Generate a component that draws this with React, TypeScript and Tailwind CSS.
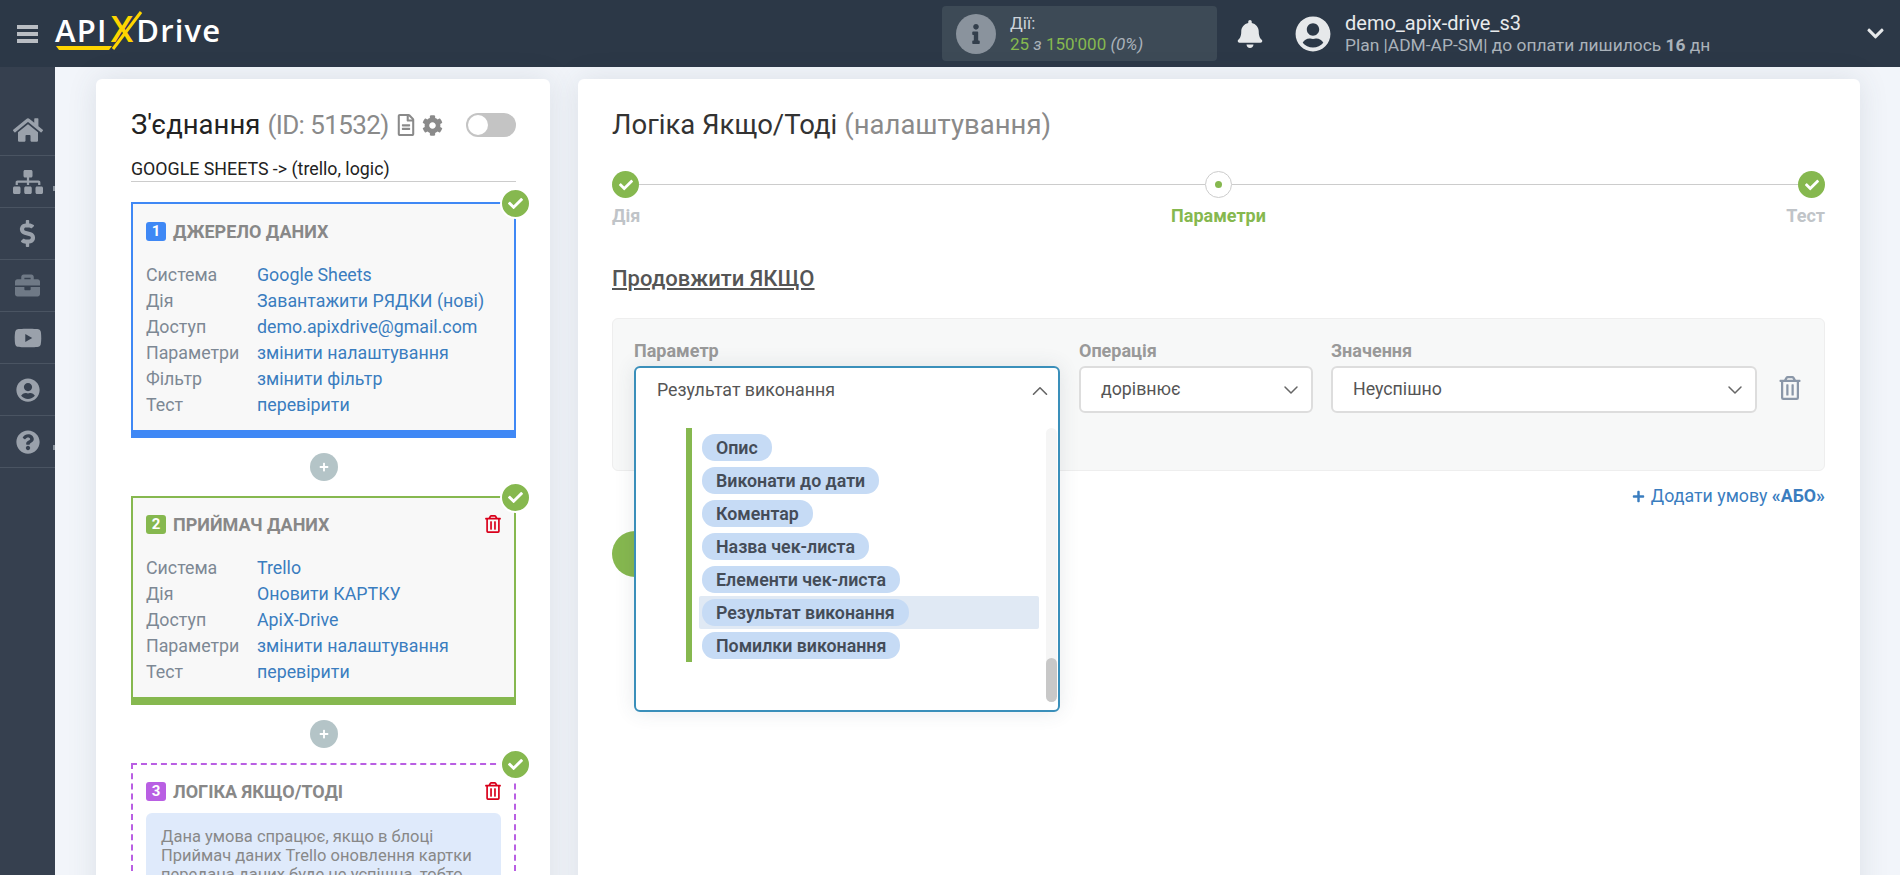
import { ChevronDown, ChevronUp } from 'lucide-react'
import {
  FaBell,
  FaBriefcase,
  FaCheck,
  FaChevronDown,
  FaCog,
  FaDollarSign,
  FaHome,
  FaInfo,
  FaPlus,
  FaQuestionCircle,
  FaRegFileAlt,
  FaRegTrashAlt,
  FaSitemap,
  FaUserCircle,
  FaYoutube,
} from 'react-icons/fa'

const navItems = [
  { icon: <FaSitemap size={30} />, color: 'text-[#9aa1ab]' },
  { icon: <FaDollarSign size={27} />, color: 'text-[#9aa1ab]' },
  { icon: <FaBriefcase size={25} />, color: 'text-[#6f7986]' },
  { icon: <FaYoutube size={28} />, color: 'text-[#9aa1ab]' },
  { icon: <FaUserCircle size={24} />, color: 'text-[#9aa1ab]' },
  { icon: <FaQuestionCircle size={24} />, color: 'text-[#9aa1ab]' },
]

const sourceRows = [
  ['Система', 'Google Sheets'],
  ['Дія', 'Завантажити РЯДКИ (нові)'],
  ['Доступ', 'demo.apixdrive@gmail.com'],
  ['Параметри', 'змінити налаштування'],
  ['Фільтр', 'змінити фільтр'],
  ['Тест', 'перевірити'],
]

const targetRows = [
  ['Система', 'Trello'],
  ['Дія', 'Оновити КАРТКУ'],
  ['Доступ', 'ApiX-Drive'],
  ['Параметри', 'змінити налаштування'],
  ['Тест', 'перевірити'],
]

const fields = [
  'Опис',
  'Виконати до дати',
  'Коментар',
  'Назва чек-листа',
  'Елементи чек-листа',
  'Результат виконання',
  'Помилки виконання',
]

function CheckMark() {
  return (
    <span className="absolute -top-[16px] -right-[17px] flex h-[31px] w-[31px] items-center justify-center rounded-full border-2 border-white bg-[#86b84f] text-white">
      <FaCheck size={15} />
    </span>
  )
}

function Rows({ rows, className }: { rows: string[][]; className: string }) {
  return (
    <div className={className}>
      {rows.map(([label, value]) => (
        <div key={label} className="flex h-[26px] items-center text-[17.8px]">
          <span className="w-[111px] text-[#7d8894]">{label}</span>
          <span className="text-[#3a7dbf]">{value}</span>
        </div>
      ))}
    </div>
  )
}

function CardHeader({ num, title, badge, trash }: { num: number; title: string; badge: string; trash?: boolean }) {
  return (
    <div className="flex h-[20px] items-center">
      <span className={`flex h-[19px] w-[20px] items-center justify-center rounded-[3px] text-[15px] font-bold text-white ${badge}`}>
        {num}
      </span>
      <span className="ml-[7px] text-[18px] font-bold text-[#888888]">{title}</span>
      {trash ? <FaRegTrashAlt size={18} className="-mr-[1px] ml-auto text-[#d9001b]" /> : null}
    </div>
  )
}

function AddButton() {
  return (
    <div className="my-[15px] flex justify-center">
      <span className="flex h-[28px] w-[28px] items-center justify-center rounded-full bg-[#b4c4c7] text-white">
        <FaPlus size={10} />
      </span>
    </div>
  )
}

function SelectBox({ text, width }: { text: string; width: string }) {
  return (
    <div className={`flex h-[47px] items-center justify-between rounded-[6px] border-2 border-[#dddddd] bg-white pr-[8px] pl-[20px] text-[17.8px] text-[#555555] ${width}`}>
      {text}
      <ChevronDown size={24} strokeWidth={1.5} className="text-[#666666]" />
    </div>
  )
}

function Logo() {
  return (
    <div className="relative ml-[17px] flex h-[67px] w-[180px] items-baseline pt-[12px] font-['Open_Sans',sans-serif] text-[31px] leading-[34px] font-semibold tracking-[1.2px] text-white">
      <span>API</span>
      <span className="ml-[3px] text-[36px] text-[#ffd500]">X</span>
      <span className="ml-[2px]">Drive</span>
      <svg viewBox="0 0 180 67" className="absolute top-0 left-0 h-[67px] w-[180px]">
        <polygon points="1,46 57,46 54,50 4,50" fill="#ffd500" />
        <line x1="58" y1="49" x2="86" y2="12" stroke="#ffd500" strokeWidth="3" />
      </svg>
    </div>
  )
}

export default function App() {
  return (
    <div className="flex h-[875px] flex-col overflow-hidden bg-[#f2f5fa] font-['Roboto',sans-serif]">
      <header className="flex h-[67px] shrink-0 items-center bg-[#2c3847]">
        <div className="ml-[17px] flex w-[21px] flex-col gap-[3px]">
          <span className="h-[4px] bg-[#b9bdc3]" />
          <span className="h-[4px] bg-[#b9bdc3]" />
          <span className="h-[4px] bg-[#b9bdc3]" />
        </div>
        <Logo />
        <div className="ml-[707px] flex h-[55px] w-[275px] items-center rounded-[4px] bg-[#3d4a56] pl-[14px]">
          <span className="flex h-[40px] w-[40px] items-center justify-center rounded-full bg-[#8a939d] text-[#333f4c]">
            <FaInfo size={20} />
          </span>
          <div className="ml-[14px] text-[17px] leading-[21px]">
            <div className="text-[#ccd2d8]">Дії:</div>
            <div className="text-[#86b84f]">
              25 <i className="text-[#aab2ba]">з</i> 150'000 <i className="text-[#aab2ba]">(0%)</i>
            </div>
          </div>
        </div>
        <FaBell size={28} className="ml-[19px] text-[#e6e8ea]" />
        <FaUserCircle size={36} className="ml-[31px] text-[#e6e8ea]" />
        <div className="ml-[14px] leading-[22px]">
          <div className="text-[20px] text-[#e8eaec]">demo_apix-drive_s3</div>
          <div className="text-[17.4px] text-[#aab2ba]">
            Plan |ADM-AP-SM| до оплати лишилось <b>16</b> дн
          </div>
        </div>
        <FaChevronDown size={19} className="mr-[15px] ml-auto text-[#e6e8ea]" />
      </header>

      <div className="flex min-h-0 flex-1">
        <aside className="relative w-[55px] shrink-0 bg-[#36404f]">
          <div className="flex h-[89px] items-end justify-center border-b border-[#4a5462] pb-[10px] text-[#9aa1ab]">
            <FaHome size={30} />
          </div>
          {navItems.map((item, index) => (
            <div key={index} className={`flex h-[52px] items-center justify-center border-b border-[#4a5462] ${item.color}`}>
              {item.icon}
            </div>
          ))}
          <span className="absolute top-[119px] right-0 h-[5px] w-[2px] bg-[#8a939d]" />
          <span className="absolute top-[378px] right-0 h-[5px] w-[2px] bg-[#8a939d]" />
        </aside>

        <main className="flex min-w-0 flex-1 gap-[28px] pt-[12px] pr-[40px] pl-[41px]">
          <section className="h-[900px] w-[454px] shrink-0 rounded-[6px] bg-white pt-[30px] pr-[34px] pl-[35px] shadow-[0_0_30px_rgba(60,70,90,0.12)]">
            <div className="flex h-[32px] items-center">
              <span className="text-[27.5px] text-[#222222]">З'єднання</span>
              <span className="ml-[7px] text-[26px] tracking-[-0.6px] text-[#8a8a8a]">(ID: 51532)</span>
              <FaRegFileAlt size={22} className="ml-[6px] text-[#8a8a8a]" />
              <FaCog size={21} className="ml-[5px] text-[#8a8a8a]" />
              <span className="relative ml-auto h-[24px] w-[50px] rounded-full bg-[#c4c4c4]">
                <span className="absolute top-[2px] left-[2px] h-[20px] w-[20px] rounded-full bg-white" />
              </span>
            </div>
            <div className="mt-[11px] flex h-[30px] items-center border-b border-[#cccccc] pt-[6px] text-[17.8px] text-[#222222]">
              GOOGLE SHEETS -&gt; (trello, logic)
            </div>

            <div className="relative mt-[20px] border-2 border-b-[8px] border-[#3f88f5] bg-[#f8f8f8] px-[13px] pt-[17px] pb-[12px]">
              <CheckMark />
              <CardHeader num={1} title="ДЖЕРЕЛО ДАНИХ" badge="bg-[#3f88f5]" />
              <Rows rows={sourceRows} className="mt-[21px]" />
            </div>

            <AddButton />

            <div className="relative border-2 border-b-[8px] border-[#86b84f] bg-[#f8f8f8] px-[13px] pt-[16px] pb-[12px]">
              <CheckMark />
              <CardHeader num={2} title="ПРИЙМАЧ ДАНИХ" badge="bg-[#86b84f]" trash />
              <Rows rows={targetRows} className="mt-[21px]" />
            </div>

            <AddButton />

            <div className="relative border-2 border-dashed border-[#b95fe3] bg-white px-[13px] pt-[16px] pb-[13px]">
              <CheckMark />
              <CardHeader num={3} title="ЛОГІКА ЯКЩО/ТОДІ" badge="bg-[#b95fe3]" trash />
              <div className="mt-[12px] rounded-[6px] bg-[#dfeafb] px-[15px] pt-[14px] pb-[14px] text-[16.5px] leading-[19px] text-[#888888]">
                Дана умова спрацює, якщо в блоці Приймач даних Trello оновлення картки передана даних буде не успішна, тобто
                виникне помилка
              </div>
            </div>
          </section>

          <section className="h-[900px] min-w-0 flex-1 rounded-[6px] bg-white pt-[30px] pr-[35px] pl-[34px] shadow-[0_0_30px_rgba(60,70,90,0.12)]">
            <div className="flex h-[32px] items-center text-[27.5px]">
              <span className="text-[#333333]">Логіка Якщо/Тоді</span>
              <span className="ml-[7px] text-[#8a8a8a]">(налаштування)</span>
            </div>

            <div className="mt-[30px] flex items-center">
              <span className="flex h-[27px] w-[27px] items-center justify-center rounded-full bg-[#86b84f] text-white">
                <FaCheck size={14} />
              </span>
              <span className="h-[1px] flex-1 bg-[#cccccc]" />
              <span className="flex h-[27px] w-[27px] items-center justify-center rounded-full border border-[#cccccc] bg-white">
                <span className="h-[7px] w-[7px] rounded-full bg-[#86b84f]" />
              </span>
              <span className="h-[1px] flex-1 bg-[#cccccc]" />
              <span className="flex h-[27px] w-[27px] items-center justify-center rounded-full bg-[#86b84f] text-white">
                <FaCheck size={14} />
              </span>
            </div>
            <div className="mt-[4px] grid h-[20px] grid-cols-3 items-center text-[18px] font-bold">
              <span className="text-[#c0c4c8]">Дія</span>
              <span className="text-center text-[#86b84f]">Параметри</span>
              <span className="text-right text-[#c0c4c8]">Тест</span>
            </div>

            <div className="mt-[44px] h-[26px] text-[22px] leading-[26px] font-medium text-[#555555] underline">
              Продовжити ЯКЩО
            </div>

            <div className="mt-[26px] h-[153px] rounded-[6px] border border-[#eeeeee] bg-[#f7f8f8] px-[21px] pt-[22px]">
              <div className="flex gap-[19px]">
                <div className="relative w-[426px]">
                  <div className="h-[20px] text-[18px] leading-[20px] font-bold text-[#999999]">Параметр</div>
                  <div className="absolute top-[25px] left-0 z-10 h-[346px] w-[426px] rounded-[6px] border-2 border-[#3a8fba] bg-white shadow-[0_0_20px_rgba(60,70,90,0.12)]">
                    <div className="flex h-[45px] items-center justify-between pr-[5px] pl-[21px] text-[17.8px] text-[#555555]">
                      Результат виконання
                      <ChevronUp size={26} strokeWidth={1.5} className="text-[#666666]" />
                    </div>
                    <div className="absolute top-[228px] left-[63px] h-[33px] w-[340px] rounded-[2px] bg-[#e0e9f4]" />
                    <div className="relative mt-[15px] ml-[50px] w-[6px] bg-[#86b84f]">
                      <div className="h-[234px]" />
                      <div className="absolute top-[6px] left-[16px] flex flex-col gap-[6px]">
                        {fields.map((field) => (
                          <span
                            key={field}
                            className="flex h-[27px] w-fit items-center rounded-[13px] bg-[#c6dbf5] px-[14px] pt-[1px] text-[17.8px] font-semibold whitespace-nowrap text-[#444c58]"
                          >
                            {field}
                          </span>
                        ))}
                      </div>
                    </div>
                    <div className="absolute top-[60px] right-[1px] flex h-[274px] w-[11px] items-end rounded-full bg-[#f5f5f5]">
                      <span className="h-[44px] w-full rounded-full bg-[#c8c8c8]" />
                    </div>
                  </div>
                </div>
                <div className="w-[234px]">
                  <div className="h-[20px] text-[18px] leading-[20px] font-bold text-[#999999]">Операція</div>
                  <div className="mt-[5px]">
                    <SelectBox text="дорівнює" width="w-[234px]" />
                  </div>
                </div>
                <div className="-ml-[1px] w-[426px]">
                  <div className="h-[20px] text-[18px] leading-[20px] font-bold text-[#999999]">Значення</div>
                  <div className="mt-[5px]">
                    <SelectBox text="Неуспішно" width="w-[426px]" />
                  </div>
                </div>
                <FaRegTrashAlt size={24} className="mt-[35px] ml-[2px] text-[#8a97a8]" />
              </div>
            </div>

            <div className="mt-[14px] flex h-[22px] items-center justify-end text-[17.8px] text-[#3a7dbf]">
              <FaPlus size={13} className="mr-[6px]" />
              Додати умову&nbsp;<b>«АБО»</b>
            </div>

            <div className="mt-[24px] h-[46px] w-[200px] rounded-full bg-[#86b84f]" />
          </section>
        </main>
      </div>
    </div>
  )
}
